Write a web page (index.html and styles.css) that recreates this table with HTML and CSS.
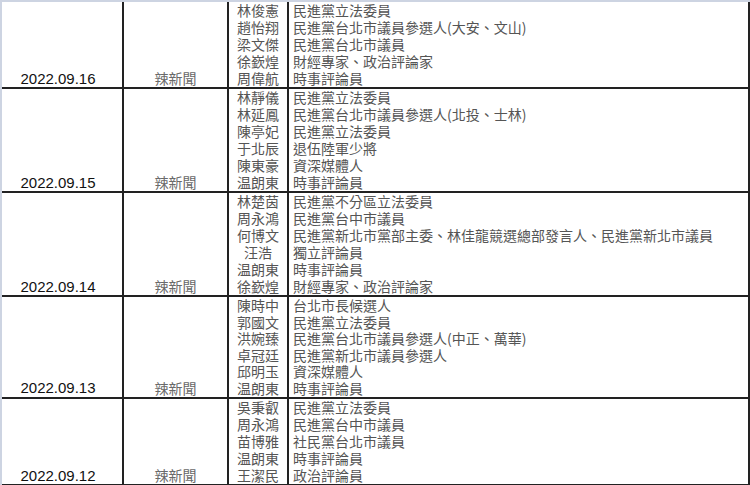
FILE: index.html
```html
<!DOCTYPE html>
<html lang="zh-Hant">
<head>
<meta charset="utf-8">
<title>辣新聞 來賓表</title>
<link rel="stylesheet" href="styles.css">
</head>
<body>
<div class="sheet">
  <div class="group">
    <div class="date">2022.09.16</div>
    <div class="source">辣新聞</div>
    <div class="names">
      <div>林俊憲</div><div>趙怡翔</div><div>梁文傑</div><div>徐嶔煌</div><div>周偉航</div>
    </div>
    <div class="roles">
      <div>民進黨立法委員</div>
      <div>民進黨台北市議員參選人(大安、文山)</div>
      <div>民進黨台北市議員</div>
      <div>財經專家、政治評論家</div>
      <div>時事評論員</div>
    </div>
  </div>
  <div class="group">
    <div class="date">2022.09.15</div>
    <div class="source">辣新聞</div>
    <div class="names">
      <div>林靜儀</div><div>林延鳳</div><div>陳亭妃</div><div>于北辰</div><div>陳東豪</div><div>温朗東</div>
    </div>
    <div class="roles">
      <div>民進黨立法委員</div>
      <div>民進黨台北市議員參選人(北投、士林)</div>
      <div>民進黨立法委員</div>
      <div>退伍陸軍少將</div>
      <div>資深媒體人</div>
      <div>時事評論員</div>
    </div>
  </div>
  <div class="group">
    <div class="date">2022.09.14</div>
    <div class="source">辣新聞</div>
    <div class="names">
      <div>林楚茵</div><div>周永鴻</div><div>何博文</div><div>汪浩</div><div>温朗東</div><div>徐嶔煌</div>
    </div>
    <div class="roles">
      <div>民進黨不分區立法委員</div>
      <div>民進黨台中市議員</div>
      <div>民進黨新北市黨部主委、林佳龍競選總部發言人、民進黨新北市議員</div>
      <div>獨立評論員</div>
      <div>時事評論員</div>
      <div>財經專家、政治評論家</div>
    </div>
  </div>
  <div class="group tight">
    <div class="date">2022.09.13</div>
    <div class="source">辣新聞</div>
    <div class="names">
      <div>陳時中</div><div>郭國文</div><div>洪婉臻</div><div>卓冠廷</div><div>邱明玉</div><div>温朗東</div>
    </div>
    <div class="roles">
      <div>台北市長候選人</div>
      <div>民進黨立法委員</div>
      <div>民進黨台北市議員參選人(中正、萬華)</div>
      <div>民進黨新北市議員參選人</div>
      <div>資深媒體人</div>
      <div>時事評論員</div>
    </div>
  </div>
  <div class="group">
    <div class="date">2022.09.12</div>
    <div class="source">辣新聞</div>
    <div class="names">
      <div>吳秉叡</div><div>周永鴻</div><div>苗博雅</div><div>温朗東</div><div>王潔民</div>
    </div>
    <div class="roles">
      <div>民進黨立法委員</div>
      <div>民進黨台中市議員</div>
      <div>社民黨台北市議員</div>
      <div>時事評論員</div>
      <div>政治評論員</div>
    </div>
  </div>
</div>
</body>
</html>
```
FILE: styles.css
```css
html, body {
  margin: 0;
  padding: 0;
  background: #cdd4e2;
}
body {
  width: 750px;
  height: 485px;
  overflow: hidden;
}
.sheet {
  margin: 2px 0 0 2px;
  width: 746px;
  background: #ffffff;
  border-right: 2px solid #222;
  box-sizing: content-box;
}
.group {
  display: grid;
  grid-template-columns: 122px 105px 60px 1fr;
  border-bottom: 2px solid #222;
  line-height: 17px;
  font-family: "Noto Sans CJK TC", "Noto Sans CJK SC", sans-serif;
  font-size: 14px;
  color: #555555;
}
.group.tight {
  line-height: 16.6px;
}
.date, .source, .names {
  border-right: 2px solid #222;
}
.date {
  display: flex;
  align-items: flex-end;
  justify-content: center;
  padding-right: 8px;
  font-family: "Liberation Sans", Arial, sans-serif;
  font-size: 15px;
  color: #111;
}
.source {
  display: flex;
  align-items: flex-end;
  justify-content: center;
  color: #6a6a6a;
}
.names {
  text-align: center;
}
.roles {
  padding-left: 4px;
  white-space: nowrap;
}
```
